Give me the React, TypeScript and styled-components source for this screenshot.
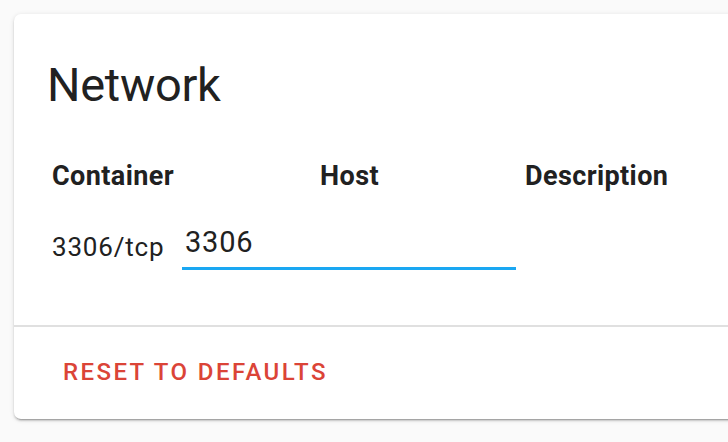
import React from 'react'
import styled, { createGlobalStyle } from 'styled-components'

const GlobalStyle = createGlobalStyle`
    html, body {
        margin: 0;
        padding: 0;
        background-color: #fafafa;
        overflow: hidden;
    }
    body {
        font-family: Roboto, 'Noto Sans', sans-serif;
        color: #212121;
    }
`

const Page = styled.div`
    width: 728px;
    height: 442px;
    padding: 14px 0 0 14px;
    box-sizing: border-box;
    overflow: hidden;
`

const Card = styled.div`
    width: 760px;
    background-color: #ffffff;
    border-radius: 7px;
    box-shadow: 0 2px 2px 0 rgba(0, 0, 0, 0.14), 0 1px 5px 0 rgba(0, 0, 0, 0.12),
        0 3px 1px -2px rgba(0, 0, 0, 0.2);
`

const CardHeader = styled.div`
    font-size: 47px;
    line-height: 56px;
    font-weight: 400;
    color: #212121;
    padding: 43px 0 0 33px;
    letter-spacing: -0.3px;
`

const CardContent = styled.div`
    padding: 47px 0 55px 38px;
`

const Table = styled.table`
    border-collapse: collapse;
    border-spacing: 0;
`

const HeadCell = styled.th<{ align?: string; width: number; indent?: number }>`
    width: ${(props) => props.width}px;
    box-sizing: border-box;
    font-size: 27px;
    font-weight: 700;
    letter-spacing: 0.4px;
    color: #212121;
    text-align: ${(props) => props.align || 'left'};
    padding: 0 0 32px ${(props) => props.indent || 0}px;
    line-height: 32px;
    white-space: nowrap;
`

const Cell = styled.td`
    font-size: 26px;
    letter-spacing: 0.8px;
    color: #212121;
    padding: 0;
    vertical-align: middle;
    white-space: nowrap;
`

const InputField = styled.div`
    width: 334px;
    height: 46px;
    box-sizing: border-box;
    border-bottom: 3px solid #1aa7f2;
    padding: 0 0 7px 3px;
    font-size: 29px;
    letter-spacing: 0.8px;
    line-height: 36px;
    color: #212121;
`

const Divider = styled.div`
    height: 2px;
    background-color: #e0e0e0;
`

const Actions = styled.div`
    padding: 27px 0 29px 49px;
`

const ResetButton = styled.button`
    border: none;
    background: none;
    padding: 0;
    margin: 0;
    font-family: Roboto, 'Noto Sans', sans-serif;
    font-size: 24px;
    font-weight: 500;
    letter-spacing: 2.4px;
    text-transform: uppercase;
    color: #db4437;
    line-height: 36px;
    cursor: pointer;
`

const ports = [{ container: '3306/tcp', host: '3306', description: '' }]

const App = () => {
    return (
        <Page>
            <GlobalStyle />
            <Card>
                <CardHeader>Network</CardHeader>
                <CardContent>
                    <Table>
                        <thead>
                            <tr>
                                <HeadCell width={130}>Container</HeadCell>
                                <HeadCell width={335} align="center">
                                    Host
                                </HeadCell>
                                <HeadCell width={200} indent={8}>
                                    Description
                                </HeadCell>
                            </tr>
                        </thead>
                        <tbody>
                            {ports.map((port) => (
                                <tr key={port.container}>
                                    <Cell>{port.container}</Cell>
                                    <Cell>
                                        <InputField>{port.host}</InputField>
                                    </Cell>
                                    <Cell>{port.description}</Cell>
                                </tr>
                            ))}
                        </tbody>
                    </Table>
                </CardContent>
                <Divider />
                <Actions>
                    <ResetButton>Reset to defaults</ResetButton>
                </Actions>
            </Card>
        </Page>
    )
}

export default App
